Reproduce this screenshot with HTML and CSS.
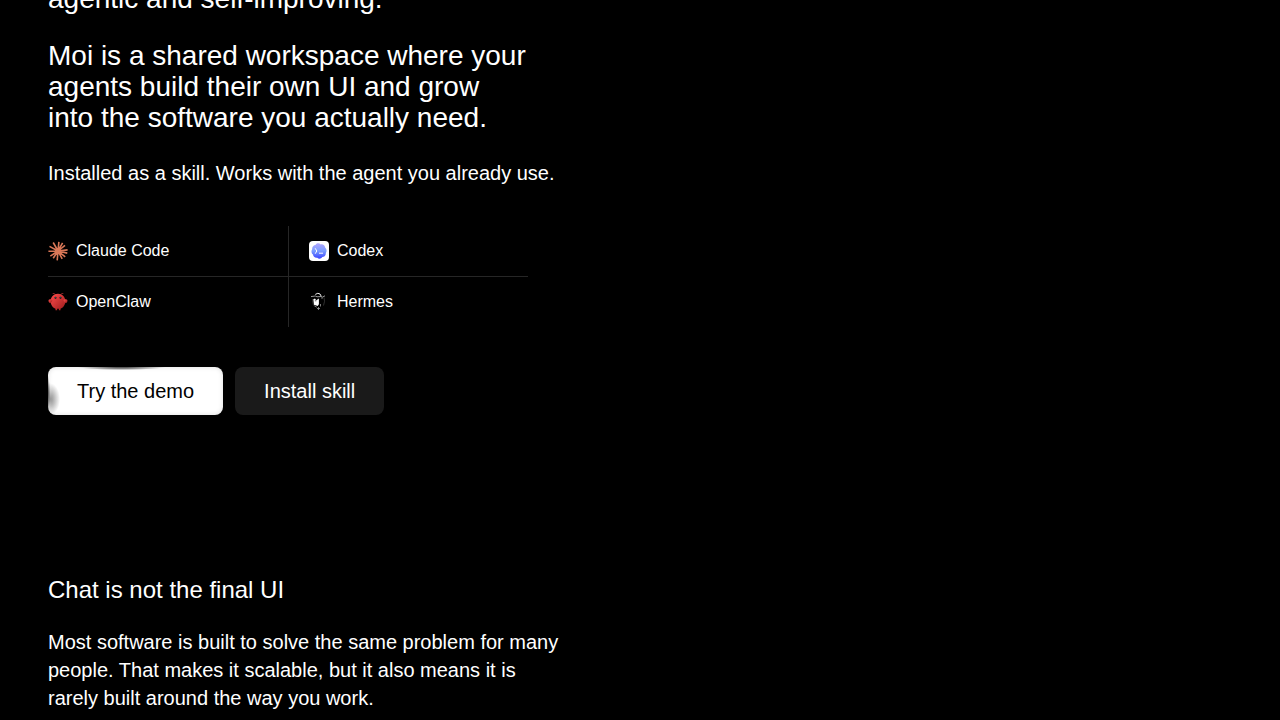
FILE: index.html
```html
<!DOCTYPE html>
<html lang="en">
<head>
    <meta charset="UTF-8">
    <meta name="viewport" content="width=device-width, initial-scale=1.0">
    <title>Moi</title>
    <link rel="stylesheet" href="styles.css">
</head>
<body>
    <main class="page">
        <section class="hero">
            <p class="lead">agentic and self-improving.</p>
            <h1 class="lead">Moi is a shared workspace where your<br>agents build their own UI and grow<br>into the software you actually need.</h1>
            <p class="copy">Installed as a skill. Works with the agent you already use.</p>
        </section>

        <ul class="agents">
            <li class="agent">
                <svg class="agent-icon" viewBox="0 0 20 20" fill="none" stroke="#d97757" stroke-width="1.6" aria-hidden="true">
                    <path d="M10 10 10.9 .8M10 10 14.6 1.8M10 10 17 4.3M10 10 19.6 8.9M10 10 19.3 12.1M10 10 17.2 15.8M10 10 14.2 17.8M10 10 9.2 19.4M10 10 5.2 17.3M10 10 2.3 15.2M10 10 .4 10.2M10 10 1.5 5.4M10 10 5.2 1.5"/>
                    <circle cx="10" cy="10" r="3" fill="#d97757" stroke="none"/>
                </svg>
                <span>Claude Code</span>
            </li>
            <li class="agent">
                <svg class="agent-icon" viewBox="0 0 20 20" fill="none" aria-hidden="true">
                    <defs>
                        <linearGradient id="codex" x1="0" y1="0" x2="0" y2="1">
                            <stop offset="0" stop-color="#b1a7ff"/>
                            <stop offset=".5" stop-color="#7a9dff"/>
                            <stop offset="1" stop-color="#3941ff"/>
                        </linearGradient>
                    </defs>
                    <rect width="20" height="20" rx="4" fill="#fff"/>
                    <path fill="url(#codex)" d="M7.5 2.8C9 2 10.6 2.3 11.7 3.4C14 2.9 16 4.3 16.1 6.6C17.8 8 18 10.4 16.8 12C17 14.4 15.3 16 13.3 16.1C12 18 9.7 18.1 8.3 16.8C6 17.2 4.1 15.8 4 13.6C2.3 12.2 2 10 3.2 8.3C2.9 6.1 4.4 4.3 6.5 4.1C6.8 3.5 7 3.1 7.5 2.8Z"/>
                    <path d="M6.4 7.6 7.8 10 6.4 12.4M10.4 12.2H13.7" stroke="#fff" stroke-linecap="round" stroke-linejoin="round"/>
                </svg>
                <span>Codex</span>
            </li>
            <li class="agent">
                <svg class="agent-icon" viewBox="0 0 120 120" fill="none" aria-hidden="true">
                    <defs>
                        <linearGradient id="lobster" x1="0" y1="0" x2="1" y2="1">
                            <stop offset="0" stop-color="#ff4d4d"/>
                            <stop offset="1" stop-color="#991b1b"/>
                        </linearGradient>
                    </defs>
                    <g fill="url(#lobster)">
                        <path d="M60 10C30 10 15 35 15 55C15 75 30 95 45 100V110H55V100Q60 102 65 100V110H75V100C90 95 105 75 105 55C105 35 90 10 60 10Z"/>
                        <path d="M20 45C5 40 0 50 5 60C10 70 20 65 25 55C28 48 25 45 20 45Z"/>
                        <path d="M100 45C115 40 120 50 115 60C110 70 100 65 95 55C92 48 95 45 100 45Z"/>
                    </g>
                    <path d="M45 15Q35 5 30 8M75 15Q85 5 90 8" stroke="#ff4d4d" stroke-width="3" stroke-linecap="round"/>
                    <g fill="#050810">
                        <circle cx="45" cy="35" r="6"/>
                        <circle cx="75" cy="35" r="6"/>
                    </g>
                    <g fill="#00e5cc">
                        <circle cx="46" cy="34" r="2.5"/>
                        <circle cx="76" cy="34" r="2.5"/>
                    </g>
                </svg>
                <span>OpenClaw</span>
            </li>
            <li class="agent">
                <svg class="agent-icon" viewBox="0 0 20 20" fill="none" aria-hidden="true">
                    <path d="M2 4.6 6.3 4 8 4.8 12 4.5 13 5.4 16 3.8" stroke="#aaa" stroke-width=".9"/>
                    <path d="M6.3 2.4Q9 .4 11 2L12.3 4.4" stroke="#eee"/>
                    <path d="M15 5.5Q16.4 9 14.5 13.5M3.7 7Q3.2 10 4.6 13.5" stroke="#444" stroke-width=".7"/>
                    <path d="M4.3 7.2 6 6.6 7.2 8.2 9.9 6.6V12.2L8.7 14 5 12.8Z" fill="#fff"/>
                    <path d="M5.8 8.8H7.4" stroke="#222" stroke-width=".7"/>
                    <path d="M5.3 13.8 7.8 15.2M8 16.5H11M9.5 15V18M11.5 12V14.5" stroke="#999" stroke-width=".8"/>
                    <circle cx="13" cy="6.5" r=".5" fill="#999"/>
                </svg>
                <span>Hermes</span>
            </li>
        </ul>

        <div class="actions">
            <button type="button" class="btn btn-primary">Try the demo</button>
            <button type="button" class="btn btn-secondary">Install skill</button>
        </div>

        <section class="about">
            <h2>Chat is not the final UI</h2>
            <p class="copy">Most software is built to solve the same problem for many<br>people. That makes it scalable, but it also means it is<br>rarely built around the way you work.</p>
        </section>
    </main>
</body>
</html>
```
FILE: styles.css
```css
* {
    margin: 0;
    padding: 0;
    box-sizing: border-box;
}

body {
    background: #000;
    color: #fff;
    font-family: "Liberation Sans", Arial, sans-serif;
}

.page {
    padding: 0 48px;
}

.hero {
    display: flex;
    flex-direction: column;
    gap: 26px;
    margin-top: -17px;
}

.lead {
    font-size: 28px;
    font-weight: 400;
    line-height: 31px;
}

.copy {
    font-size: 20px;
    line-height: 28px;
}

.agents {
    display: grid;
    grid-template-columns: 1fr 1fr;
    max-width: 480px;
    margin-top: 39px;
    list-style: none;
}

.agent {
    display: flex;
    align-items: center;
    gap: 8px;
    padding: 15px 0;
    font-size: 16px;
    line-height: 20px;
}

.agent:nth-child(even) {
    padding-left: 20px;
    border-left: 1px solid #262626;
}

.agent:nth-child(-n+2) {
    border-bottom: 1px solid #262626;
}

.agent-icon {
    width: 20px;
    height: 20px;
}

.actions {
    display: flex;
    gap: 12px;
    margin-top: 40px;
}

.btn {
    padding: 10px 29px;
    border: none;
    border-radius: 8px;
    font-family: inherit;
    font-size: 20px;
    line-height: 28px;
    cursor: pointer;
}

.btn-primary {
    background:
        radial-gradient(44px 3px at 42% 0, #000 20%, transparent),
        radial-gradient(2px 18px at 0 55%, #000 20%, transparent),
        radial-gradient(10px 16px at 2px 67%, #888, transparent),
        #fff;
    box-shadow: inset 0 0 5px #ddd;
    color: #000;
}

.btn-secondary {
    background: #1a1a1a;
    color: #fff;
}

.about {
    display: flex;
    flex-direction: column;
    gap: 24px;
    margin-top: 160px;
}

.about h2 {
    font-size: 24px;
    font-weight: 400;
    line-height: 29px;
}
```
